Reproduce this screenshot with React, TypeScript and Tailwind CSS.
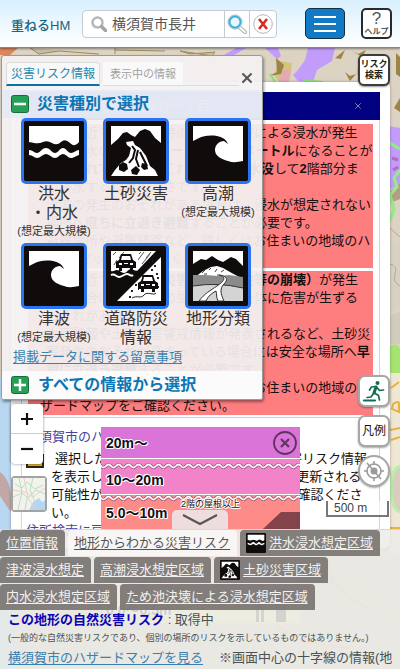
import React from "react";
import { X } from "lucide-react";

type Glyph = () => React.ReactElement;

/* ---------- Pictograms ---------- */

function FloodGlyph() {
  return (
    <g>
      <path d="M5 5H55V21q-4 6-9 1t-9-1-9 1-9-1-9 1-5-1Z" fill="#fff" />
      <path d="M5 29c4 0 5 3 8 3s5-5 9-5 6 5 9 5 5-5 8-5 5 5 8 5 5-3 8-3v5c-4 1-5 3-8 3s-5-4-8-4-5 4-8 4-6-4-9-4-6 4-9 4-4-3-8-3Z" fill="#fff" />
    </g>
  );
}

function LandslideGlyph() {
  return (
    <g>
      <path d="M5 5H55V22L49 17 44 10 39 8 34 10 29 16 25 14 21 11 17 12 12 18 5 24Z" fill="#fff" />
      <path d="M20 21l7-1 2 4 5 3 6 8 4 10 5 4 3 6H5l4-6 6-7 5-3 3-4 2-8-4-3Z" fill="#fff" />
      <path d="M26 25l3 4-2 8-4 5M32 29l-2 9 3 8M34 31l4 8 3 6" stroke="#100c0b" strokeWidth="2" fill="none" />
      <path d="M13 44l4-3 4 2 1 5-4 3-5-2ZM25 49l5-4 4 4-3 5-5-1ZM36 42l5 1 1 5-4 1-3-3ZM17 35l4-2-1 5-4 2Z" fill="#100c0b" />
    </g>
  );
}

function WaveGlyph() {
  return (
    <path
      d="M5 5H55V40c-5 1-10 2-15 0-7-2-13-5-13-11 0-5 4-9 9-9l4 3c-2-5-6-7-11-8-8-1-14 0-18 2l-6 3Z"
      fill="#fff"
    />
  );
}

function Car({ x, y }: { x: number; y: number }) {
  return (
    <g transform={`translate(${x} ${y})`}>
      <path d="M1 15V9l3-2 2-6h10l2 6 3 2v6h-3v3h-3v-3H7v3H4v-3Z" fill="#100c0b" />
      <path d="M7 3h8l1 4H6ZM4 10h3v2H4Zm11 0h3v2h-3ZM9 10h4v1H9Z" fill="#fff" />
    </g>
  );
}

function RoadGlyph() {
  return (
    <g>
      <path d="M5 5H50L33 23c-3 4-5 0-8 0s-4 4-7 4-4-3-7-3-3 2-6 1Z" fill="#fff" />
      <path d="M7 9l3-3M13 12l5-6M32 14l6-8M36 18l8-10M8 19l3-5M33 8l2-2M40 12l5-6" stroke="#555" strokeWidth="1" />
      <Car x={9} y={7} />
      <path d="M5 29c4-2 5 2 8 2s5-3 8-3 4 3 6 1" stroke="#fff" strokeWidth="2" fill="none" />
      <path d="M55 11V55H11Z" fill="#fff" />
      <path d="M45 24h2m3 4h2m-4-8h2m-14 10h2m-9 9h2m-6 6h2m5-2h1m18-11h2m-2 9h2m-30 10h2m21-36h1" stroke="#222" strokeWidth="2" />
      <Car x={31} y={28} />
      <path d="M26 52c5-3 9 1 12-3s10 1 12-2" stroke="#222" strokeWidth="1" fill="none" />
    </g>
  );
}

function LandformGlyph() {
  return (
    <g>
      <path d="M5 5H55V20l-7-7-5-2-8 5-5-2-6-4-6 4-5-1-8 5Z" fill="#fff" />
      <path d="M7 31l8-6 8-4 6-1 6 2 7 4 11 6v7H7Z" fill="#fff" />
      <path d="M14 27l3-3m4 0l2-2m4 4l2-3m4 3l3-2m-20 4h3m10 1h2" stroke="#444" strokeWidth="1" />
      <path d="M5 29l12 0 14 1 10-1 14 2v11H5Z" fill="#8b8b8b" />
      <path d="M5 40q25-4 50 2V55H5Z" fill="#d4d4d4" />
      <path d="M5 40q25-4 50 2" stroke="#333" fill="none" />
      <path d="M31 29c9 2 4 7-2 11s-13 8-18 15h7c2-5 6-8 10-10 1 4 0 6 2 10h6c-4-8-4-13 0-17s4-8-5-9Z" fill="#fff" stroke="#333" strokeWidth="1" />
    </g>
  );
}

function Pictogram({ glyph: G, className }: { glyph: Glyph; className: string }) {
  return (
    <svg viewBox="0 0 60 60" className={className} aria-hidden="true">
      <rect width="60" height="60" rx="3" fill="#100c0b" />
      <G />
    </svg>
  );
}

/* ---------- Map background ---------- */

function MapBackground() {
  return (
    <svg className="absolute inset-0 h-full w-full" viewBox="0 0 400 621" preserveAspectRatio="none" aria-hidden="true">
      <rect width="400" height="621" fill="#dcd3c3" />
      <path d="M0 330H14V621H0Z" fill="#b9d7f1" />
      <path d="M0 424q10 6 12 30v12L0 448Z" fill="#c2a7a6" />
      <path d="M0 0h18l-8 7H0Z" fill="#d9875c" />
      <path d="M30 0l9 6 20-3 40 3M115 0v6m0-4l50 1M180 3l10 3 25-2-3 4-12-2Z" stroke="#a08a5a" strokeWidth="1" fill="#a08a5a" fillOpacity=".3" />
      <path d="M224 7l12-7h10l-12 7ZM265 0h13l3 8-4 3Z M298 22l7-10 3-12h27l-3 13-15 9-4 12-15-1-5-6Z" fill="#c29cfa" />
      <path d="M279 13l13 2-2 16-10 4-6-8Z" fill="#d3c47a" />
      <path d="M282 23l9-2-2 13h-10Z" fill="#e7a8b5" />
      <path d="M276 10l1 14-8 4 12-2 3-9ZM345 24l5 4 6-2-6 7ZM335 10l10-8-4 9ZM352 3l6 3 8-4-4 7Z" fill="#9c8448" />
      <path d="M270 26l5 8M358 21v6M303 32l20 2" stroke="#8ee07a" strokeWidth="2" />
      <path d="M396 5l4 4v20l-4-3ZM394 60l6-10v14Z" fill="#9c8448" />
      <path d="M388 78l12 2v55l-12 8Z" fill="#c29cfa" />
      <path d="M390 143l10-8v16l-10 4Z" fill="#b39d83" />
      <path d="M388 94l12 7M400 122l-6 8 3 9-7 8 4 14-4 12" stroke="#93ec87" strokeWidth="3" fill="none" />
      <path d="M392 110l6 2M393 122l5-3" stroke="#b36bc0" strokeWidth="3" />
      <path d="M389 192l11 4v60l-11 10Z" fill="#d8d1c2" />
      <path d="M390 216q8 2 5 10t5 12M390 180l10 9" stroke="#b3aa99" fill="none" />
      <path d="M389 268l11-4v32h-11Z" fill="#d1ccbe" />
      <path d="M389 298q13-6 11 12v18l-11-4Z" fill="#a5e470" />
      <path d="M390 325h10v180h-10Z" fill="#efe7d4" />
      <path d="M391 340l8-6M393 356q6-4 6 0v8l-7-3ZM390 382l10-2M391 392l9-3M390 480h10" stroke="#e9b13b" strokeWidth="2" fill="none" />
      <path d="M400 418q-10 4-9 24t9 22" fill="#d9cdbf" stroke="#b9f0a9" strokeWidth="3" />
      <path d="M0 560q60-30 120 0t140-10 140 20" stroke="#e3c9b0" strokeWidth="3" fill="none" />
      <path d="M250 500q50 30 30 60t70 40M330 500q-10 40 40 60" stroke="#e6bfa0" strokeWidth="3" fill="none" />
    </svg>
  );
}

/* ---------- Header ---------- */

function Header() {
  return (
    <header className="relative z-30 flex h-12 shrink-0 items-center border-b border-[#8c877c] bg-gradient-to-b from-[#d9f0fe] to-white pl-[11px] pr-2 shadow-[0_1px_2px_#0006]">
      <h1 className="w-[71px] whitespace-nowrap pt-1 text-[13px] font-medium leading-5 text-[#1b6480]">重ねるHM</h1>
      <form className="flex h-7 w-[195px] items-stretch overflow-hidden rounded-[4px] border border-[#c4cbd2] bg-white" onSubmit={(e) => e.preventDefault()}>
        <label className="flex min-w-0 flex-1 items-center">
          <svg viewBox="0 0 16 16" className="ml-2 size-4 shrink-0" fill="none" aria-hidden="true">
            <circle cx="6.500" cy="6.500" r="5" stroke="#b4b8bb" strokeWidth="2.500" />
            <path d="M10.500 10.500l4 4" stroke="#a3a6a9" strokeWidth="3.500" strokeLinecap="round" />
          </svg>
          <input aria-label="地名検索" defaultValue="横須賀市長井" className="ml-[5px] w-full min-w-0 bg-transparent text-[14px] leading-5 text-[#555] outline-none" />
        </label>
        <button type="submit" aria-label="検索" className="flex w-[25px] items-center justify-center border-l border-[#c4cbd2]">
          <svg viewBox="0 0 20 20" className="size-5" aria-hidden="true">
            <path d="M12 13l6 5" stroke="#a9aeb3" strokeWidth="4" strokeLinecap="round" />
            <path d="M12 13l6 5" stroke="#fff" strokeWidth="2" strokeLinecap="round" />
            <circle cx="8" cy="8" r="7" fill="#fff" stroke="#a9b4bc" />
            <circle cx="8" cy="8" r="5.500" fill="#e8f7fd" stroke="#35b1e0" strokeWidth="2" />
          </svg>
        </button>
        <button type="reset" aria-label="クリア" className="flex w-[27px] items-center justify-center border-l border-[#c4cbd2]">
          <svg viewBox="0 0 20 20" className="size-5" aria-hidden="true">
            <circle cx="10" cy="10" r="9.300" fill="#fff" stroke="#aeb7bf" />
            <path d="M6 5l8 10M14 5L6 15" stroke="#dc2a1e" strokeWidth="2.600" />
          </svg>
        </button>
      </form>
      <button aria-label="メニュー" className="ml-auto mr-4 flex h-[31px] w-10 flex-col items-center justify-center gap-[5px] rounded-[5px] border border-[#12303f] bg-[#1179c6]">
        <span className="h-0.5 w-[22px] bg-white" />
        <span className="h-0.5 w-[22px] bg-white" />
        <span className="h-0.5 w-[22px] bg-white" />
      </button>
      <button className="flex h-[31px] w-[31px] flex-col items-center justify-center rounded-[5px] border-2 border-[#2a2a2a] bg-white text-[#555]">
        <span className="font-['Liberation_Sans'] text-[17px] leading-4">?</span>
        <span className="whitespace-nowrap text-[8px] font-bold leading-[9px]">ヘルプ</span>
      </button>
    </header>
  );
}

/* ---------- Risk description window ---------- */

function RiskWindow() {
  return (
    <section className="absolute left-[11px] right-2.5 top-[34px] h-[466px] overflow-hidden rounded-[5px] bg-white px-2.5 pt-2.5 text-[13px] leading-[18px] text-[#16100f] shadow-[0_0_3px_#0005]">
      <div className="flex h-7 items-center justify-between bg-[#000080] pl-5 pr-[17px] text-white">
        <span className="whitespace-nowrap">神奈川県横須賀市長井一丁目</span>
        <button aria-label="閉じる" className="text-[#9a9cab]">
          <X className="size-[10px]" strokeWidth={2} />
        </button>
      </div>
      <div className="h-full whitespace-nowrap border-x border-[#d5d5d5] px-1.5 pt-1">
        <div className="bg-[#fe7e80] pl-3">
          <div className="pl-1.5">
            <p>この付近では、満潮時の場合、津波による浸水が発生</p>
            <p>し、浸水の深さが<b>3メートルから5メートル</b>になることが</p>
            <p><b>想定されています</b>。これは、<b>1階が水没</b>して<b>2</b>階部分ま</p>
            <p>で浸水する程度の深さです。</p>
            <p>津波の発生のおそれがある場合は、浸水が想定されない</p>
            <p>場所へ<b>直ちに立退き避難</b>することが必要です。</p>
            <p>避難場所や避難経路など、詳しくはお住まいの地域のハ</p>
          </div>
          <p>ザードマップをご確認ください。</p>
        </div>
        <div className="mt-[3px] bg-[#fe7e80] pl-3">
          <div className="pl-1.5">
            <p>この付近では、<b>土砂災害（急傾斜地等の崩壊）</b>が発生</p>
            <p>した場合は、住民等の生命または身体に危害が生ずる</p>
            <p>おそれがあります。</p>
            <p>大雨警報や土砂災害警戒情報が発表されるなど、土砂災</p>
            <p>害発生のおそれが高まっている場合には安全な場所へ<b>早</b></p>
            <p><b>期に立退き避難</b>することが必要です。</p>
            <p>避難場所や避難経路などについてはお住まいの地域のハ</p>
          </div>
          <p>ザードマップをご確認ください。</p>
        </div>
        <div className="-mx-1.5 mt-0.5 border-t border-[#cfcfcf] px-1 pt-2.5">
          <a href="#hazard" className="block text-[#4743a0]">横須賀市のハザードマップを見る</a>
          <div className="mt-1 flex gap-[7px]">
            <svg viewBox="0 0 18 14" className="mt-1 h-[14px] w-[18px] shrink-0" aria-hidden="true">
              <rect width="18" height="14" fill="#2b2512" />
              <rect x="2" y="2" width="14" height="10" fill="#d9ab2c" />
            </svg>
            <div>
              <p className="pl-1">選択した地点の地形分類に基づく自然災害リスク情報</p>
              <p>を表示しています。なお、各データは随時更新される</p>
              <p>可能性がありますので、必ず最新情報をご確認くださ</p>
              <p>い。</p>
            </div>
          </div>
          <a href="#search" className="block text-[#4743a0]">住所検索に戻る</a>
        </div>
      </div>
    </section>
  );
}

/* ---------- Depth legend ---------- */

const outline = "[text-shadow:1px_0_#fff,-1px_0_#fff,0_1px_#fff,0_-1px_#fff,1px_1px_#fff,-1px_-1px_#fff]";

function Squiggle() {
  return (
    <svg className="block h-1.5 w-full" aria-hidden="true">
      <defs>
        <pattern id="squiggle" width="10" height="6" patternUnits="userSpaceOnUse">
          <path d="M-2.500 1.500C0 1.500 0 4.500 2.500 4.500S5 1.500 7.500 1.500 10 4.500 12.500 4.500" stroke="#7d4470" strokeWidth="3" fill="none" />
          <path d="M-2.500 1.500C0 1.500 0 4.500 2.500 4.500S5 1.500 7.500 1.500 10 4.500 12.500 4.500" stroke="#fff" strokeWidth="1.800" fill="none" />
        </pattern>
      </defs>
      <rect width="100%" height="6" fill="url(#squiggle)" />
    </svg>
  );
}

function Legend() {
  return (
    <section aria-label="浸水深の凡例" className={`absolute left-[101px] top-[379px] w-[199px] overflow-hidden bg-[#fd8c89] text-[14px] font-bold leading-8 text-[#141014] ${outline}`}>
      <button aria-label="凡例を閉じる" className="absolute right-[3px] top-1 text-[#5e3560]">
        <svg viewBox="0 0 24 24" className="size-6" fill="none" stroke="currentColor" strokeWidth="1.800" aria-hidden="true">
          <circle cx="12" cy="12" r="11" />
          <path d="M8 8l8 8M16 8l-8 8" strokeWidth="2.200" />
        </svg>
      </button>
      <p className="h-8 border-b border-white bg-[#db74d9] pl-[5px]">20m～</p>
      <div className="bg-[#f383c9] pt-1">
        <Squiggle />
        <p className="h-[25px] pl-[5px] leading-[22px]">10～20m</p>
      </div>
      <div className="relative border-t border-white">
        <Squiggle />
        <p className="h-7 pl-[5px] leading-6">5.0～10m</p>
        <p className="absolute left-20 top-[3px] text-[9px] font-normal leading-3">2階の屋根以上</p>
        <svg viewBox="0 0 40 22" className="absolute right-0 top-[14px] h-[22px] w-10" aria-hidden="true">
          <path d="M4 19L21 3H40V22H0Z" fill="#83434a" />
        </svg>
      </div>
      <p className="h-8 border-t border-white bg-[#fdb3b3] pl-[5px]">3.0～5.0m</p>
      <p className="h-8 border-t border-white bg-[#fbd6cc] pl-[5px]">0.5～3.0m</p>
      <p className="h-[30px] border-t border-white bg-[#f6efb4] pl-[5px]">0.0～0.5m</p>
      <svg viewBox="0 0 40 40" className="absolute bottom-0 right-2 h-10 w-10" fill="#444" aria-hidden="true">
        <circle cx="8" cy="5" r="4" />
        <path d="M2 11h12v14h-2v14H9V26H7v13H4V25H2ZM24 6h10v33H24Z" />
      </svg>
    </section>
  );
}

/* ---------- Category panel ---------- */

const categories: { lines: string[]; note?: string; glyph: Glyph }[] = [
  { lines: ["洪水", "・内水"], note: "(想定最大規模)", glyph: FloodGlyph },
  { lines: ["土砂災害"], glyph: LandslideGlyph },
  { lines: ["高潮"], note: "(想定最大規模)", glyph: WaveGlyph },
  { lines: ["津波"], note: "(想定最大規模)", glyph: WaveGlyph },
  { lines: ["道路防災", "情報"], glyph: RoadGlyph },
  { lines: ["地形分類"], glyph: LandformGlyph },
];

function PlusMinusBox({ plus = false }: { plus?: boolean }) {
  return (
    <svg viewBox="0 0 18 18" className="size-[18px]" aria-hidden="true">
      <rect x="0.500" y="0.500" width="17" height="17" rx="2" fill="#27a057" stroke="#186b3a" />
      <path d={plus ? "M3 9h12M9 3v12" : "M3 9h12"} stroke="#fff" strokeWidth="2.500" />
    </svg>
  );
}

function CategoryPanel() {
  return (
    <aside className="absolute left-px top-[7px] z-10 w-[262px] overflow-hidden rounded-[3px] border border-[#9a9a98] bg-[#f3f1f1]/93 shadow-[1px_2px_3px_#0006]">
      <div className="flex h-[30px] items-end pl-1" role="tablist">
        <button role="tab" aria-selected="true" className="h-6 w-[94px] whitespace-nowrap rounded-t-[4px] border border-b-2 border-[#dcdcdc] border-b-[#0c70a8] bg-[#f8f8f8] text-[12px] leading-5 text-[#2587ae]">
          災害リスク情報
        </button>
        <button role="tab" aria-selected="false" className="ml-[3px] h-6 w-20 whitespace-nowrap border-b border-[#dcdcdc] bg-[#f9f9f9] text-[11px] leading-5 text-[#a2a2a2]">
          表示中の情報
        </button>
        <span className="h-px w-14 bg-[#dcdcdc]" />
        <button aria-label="パネルを閉じる" className="text-[#555]">
          <X className="size-4" strokeWidth={3} />
        </button>
      </div>
      <h2 className="mt-1 bg-[#e4e8f5]/80 pl-[9px]">
        <button className="flex h-7 items-center gap-[8px] whitespace-nowrap text-[16px] font-bold text-[#0b76b5]">
          <PlusMinusBox />
          災害種別で選択
        </button>
      </h2>
      <div className="grid grid-cols-[82px_82px_82px] gap-y-0.5 pl-[11px]">
        {categories.map((c) => (
          <button key={c.lines[0]} className="flex flex-col items-center justify-start whitespace-nowrap text-[16px] leading-[19px] text-[#333]">
            <span className="rounded-[5px] border-[3px] border-[#2a74f0] bg-[#100c0b]">
              <Pictogram glyph={c.glyph} className="size-[60px]" />
            </span>
            {c.lines.map((line) => (
              <span key={line}>{line}</span>
            ))}
            {c.note && <span className="text-[11px]">{c.note}</span>}
          </button>
        ))}
      </div>
      <a href="#notes" className="mb-1 ml-[11px] block w-fit whitespace-nowrap text-[13px] leading-5 text-[#3a82ae] underline underline-offset-2">
        掲載データに関する留意事項
      </a>
      <h2 className="bg-[#fbfbfb] pl-[9px]">
        <button className="flex h-7 items-center gap-[9px] whitespace-nowrap text-[16px] font-bold text-[#0b76b5]">
          <PlusMinusBox plus />
          すべての情報から選択
        </button>
      </h2>
    </aside>
  );
}

/* ---------- Floating map controls ---------- */

const floating = "flex h-8 w-8 items-center justify-center border-2 border-[#a7a7a7] bg-white shadow-[0_1px_2px_#0005]";

function MapControls() {
  return (
    <>
      <div className="absolute left-[11px] top-[356px] flex w-8 flex-col rounded-[4px] bg-white text-[#111] shadow-[0_0_3px_#0007]">
        {["M2 8h12M8 2v12", "M2 8h12"].map((d, i) => (
          <button key={d} aria-label={i === 0 ? "拡大" : "縮小"} className="flex h-[30px] items-center justify-center border-b border-[#ccc] last:border-0">
            <svg viewBox="0 0 16 16" className="size-4" stroke="currentColor" strokeWidth="2.200" aria-hidden="true">
              <path d={d} />
            </svg>
          </button>
        ))}
      </div>
      <button aria-label="地図の種類" className="absolute left-[11px] top-[428px] rounded-[4px] border-2 border-[#a3a3a3] bg-white">
        <svg viewBox="0 0 32 32" className="size-8" fill="none" aria-hidden="true">
          <rect width="32" height="32" fill="#f1f3ec" />
          <path d="M16 32l4-8 6-4 3 4 3-2v10Z" fill="#b4d6f0" />
          <path d="M2 6l7 4 5-6 8 7 8-4M0 19l9-4 6 5 8-8 9 4M6 0l3 14-4 18M20 0l-3 12 5 12M14 20l-2 12" stroke="#bcdcc2" />
          <path d="M0 12l12 2 8 5 12-9M11 0l4 20 8 12" stroke="#ecd0be" />
        </svg>
      </button>
      <button className="absolute right-2.5 top-[6px] flex h-8 w-8 flex-col items-center justify-center rounded-[6px] border-2 border-[#3c3c3c] bg-white text-[9px] font-bold leading-[11px] text-[#1e1e14] shadow-[0_1px_2px_#0006]">
        <span className="whitespace-nowrap">リスク</span>
        <span className="whitespace-nowrap">検索</span>
      </button>
      <div className="absolute right-2.5 top-[327px] flex flex-col gap-2">
        <button aria-label="避難場所" className={`${floating} rounded-[7px]`}>
          <svg viewBox="0 0 26 26" className="size-[26px]" fill="none" stroke="#116e50" strokeLinecap="round" strokeLinejoin="round" aria-hidden="true">
            <circle cx="16.500" cy="5" r="2" fill="#116e50" stroke="none" />
            <path d="M15 9l-2 6" strokeWidth="3" />
            <path d="M14.500 8.500l-4 .5-2 3M16 9.500l2.500 3 4-.5M13.500 15l4 2.500 1 4.500M12.500 15.500l-2.500 3.500-4 .500" strokeWidth="1.700" />
            <path d="M3 22.500h11" strokeWidth="2.200" />
          </svg>
        </button>
        <button className={`${floating} whitespace-nowrap rounded-[7px] text-[12px] text-[#111]`}>凡例</button>
        <button aria-label="現在地" className={`${floating} rounded-full`}>
          <svg viewBox="0 0 24 24" className="size-6" fill="none" stroke="#9b9b9b" strokeWidth="1.600" aria-hidden="true">
            <circle cx="12" cy="12" r="7" />
            <circle cx="12" cy="12" r="3.500" fill="#9b9b9b" stroke="none" />
            <path d="M12 2v4M12 18v4M2 12h4M18 12h4M5 4l14 16" />
          </svg>
        </button>
      </div>
      <div className="absolute right-[11px] top-[453px] h-4 w-[63px] border-2 border-t-0 border-[#777] bg-white/60 pl-[6px] font-['Liberation_Sans'] text-[12px] leading-[15px] text-[#444]">500 m</div>
    </>
  );
}

/* ---------- Bottom sheet ---------- */

const tabRows: { label: string; glyph?: Glyph; active?: boolean }[][] = [
  [{ label: "位置情報" }, { label: "地形からわかる災害リスク", active: true }, { label: "洪水浸水想定区域", glyph: FloodGlyph }],
  [{ label: "津波浸水想定" }, { label: "高潮浸水想定区域" }, { label: "土砂災害区域", glyph: LandslideGlyph }],
  [{ label: "内水浸水想定区域" }, { label: "ため池決壊による浸水想定区域" }],
];

function BottomSheet() {
  return (
    <section className="absolute inset-x-0 bottom-0 z-20">
      <button aria-label="情報パネルを閉じる" className="mx-auto flex h-[19px] w-14 items-center justify-center rounded-t-[5px] bg-[#ece6e6]/90 text-[#555]">
        <svg viewBox="0 0 36 12" className="h-3 w-9" fill="none" stroke="currentColor" strokeWidth="2" aria-hidden="true">
          <path d="M1 1l17 9L35 1" />
        </svg>
      </button>
      <div className="border-t border-[#d8d5d2] bg-[#ebebe8]/86 pb-0.5">
        <div className="flex flex-col gap-px" role="tablist">
          {tabRows.map((row) => (
            <div key={row[0].label} className="flex gap-[3px]">
              {row.map((tab) => (
                <button
                  key={tab.label}
                  role="tab"
                  aria-selected={!!tab.active}
                  className={`flex h-[26px] shrink-0 items-center gap-[3px] whitespace-nowrap rounded-t-[4px] pl-1.5 pr-[7px] text-[13px] underline underline-offset-2 ${
                    tab.active ? "bg-[#f8f7f6]/90 text-[#555]" : "bg-[#77726f]/90 text-[#f1f1f1]"
                  }`}
                >
                  {tab.glyph && <Pictogram glyph={tab.glyph} className="size-5" />}
                  {tab.label}
                </button>
              ))}
            </div>
          ))}
        </div>
        <div className="overflow-hidden whitespace-nowrap pl-2 text-[13px] leading-[19px] text-[#4a5254]">
          <p>
            <b className="text-[#0c04b4]">この地形の自然災害リスク</b> : 取得中
          </p>
          <p className="text-[9px]">(一般的な自然災害リスクであり、個別の場所のリスクを示しているものではありません。)</p>
          <p>
            <a href="#hazard-map" className="text-[#3a80b0] underline underline-offset-2">横須賀市のハザードマップを見る</a>
            <span className="ml-4">※画面中心の十字線の情報(地</span>
          </p>
        </div>
      </div>
    </section>
  );
}

export default function App() {
  return (
    <div className="flex h-screen min-h-[560px] flex-col overflow-hidden font-['Liberation_Sans','Noto_Sans_CJK_JP',sans-serif]">
      <Header />
      <main className="relative flex-1 overflow-hidden">
        <MapBackground />
        <RiskWindow />
        <Legend />
        <CategoryPanel />
        <MapControls />
        <BottomSheet />
      </main>
    </div>
  );
}
